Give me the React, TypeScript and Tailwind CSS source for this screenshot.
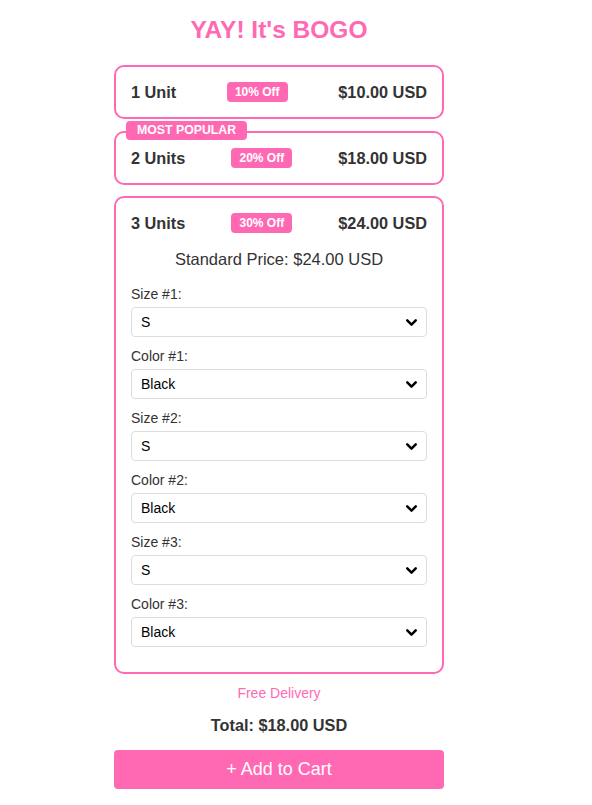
import { ChevronDown } from "lucide-react";

type Bundle = {
  units: string;
  off: string;
  price: string;
  popular?: boolean;
};

const bundles: Bundle[] = [
  { units: "1 Unit", off: "10% Off", price: "$10.00 USD" },
  { units: "2 Units", off: "20% Off", price: "$18.00 USD", popular: true },
];

const options = [
  { label: "Size #1:", value: "S" },
  { label: "Color #1:", value: "Black" },
  { label: "Size #2:", value: "S" },
  { label: "Color #2:", value: "Black" },
  { label: "Size #3:", value: "S" },
  { label: "Color #3:", value: "Black" },
];

function Header({ units, off, price }: Bundle) {
  return (
    <div className="flex h-[20px] items-center justify-between text-[16.3px] font-bold text-[#333]">
      <span>{units}</span>
      <span className="rounded-[4px] bg-[#ff69b4] px-2 py-[2px] text-[12px] leading-[16px] text-white">
        {off}
      </span>
      <span>{price}</span>
    </div>
  );
}

function Picker({ label, value }: { label: string; value: string }) {
  return (
    <div className="mb-[11px]">
      <div className="mb-[5px] text-[14px] leading-[16px] text-[#333]">{label}</div>
      <div className="flex h-[30px] items-center justify-between rounded-[4px] border border-[#ddd] bg-white pl-[9px] pr-[6px] text-[14px] text-black">
        <span>{value}</span>
        <ChevronDown size={17} strokeWidth={3.5} />
      </div>
    </div>
  );
}

export default function App() {
  return (
    <div className="w-[558px] pt-4 font-['Liberation_Sans',Arial,sans-serif]">
      <div className="mx-auto max-w-[330px]">

        <h1 className="mb-[21px] text-center text-[24.5px] font-bold leading-[28px] text-[#ff69b4]">
          YAY! It's BOGO
        </h1>

        {bundles.map((b, i) => (
          <div
            key={b.units}
            className={`relative rounded-[10px] border-2 border-[#ff69b4] bg-white px-[15px] py-[15px] ${i === 0 ? "mb-[12px]" : "mb-[11px]"}`}
          >
            {b.popular && (
              <span className="absolute -top-[12px] left-[10px] rounded-[4px] bg-[#ff69b4] px-[11px] text-[12.3px] font-bold leading-[19px] text-white">
                MOST POPULAR
              </span>
            )}
            <Header {...b} />
          </div>
        ))}

        <div className="rounded-[10px] border-2 border-[#ff69b4] bg-white px-[15px] pt-[15px] pb-[14px]">
          <Header units="3 Units" off="30% Off" price="$24.00 USD" />
          <div className="mt-[17px] mb-[18px] text-center text-[16.5px] leading-[18px] text-[#333]">
            Standard Price: $24.00 USD
          </div>
          {options.map((o) => (
            <Picker key={o.label} label={o.label} value={o.value} />
          ))}
        </div>

        <div className="mt-[11px] text-center text-[14px] leading-[16px] text-[#ff69b4]">
          Free Delivery
        </div>

        <div className="mt-[15px] text-center text-[16.3px] font-bold leading-[19px] text-[#333]">
          Total: $18.00 USD
        </div>

        <button className="mt-[15px] h-[39px] w-full rounded-[4px] bg-[#ff69b4] text-[18px] text-white">
          + Add to Cart
        </button>

      </div>
    </div>
  );
}
